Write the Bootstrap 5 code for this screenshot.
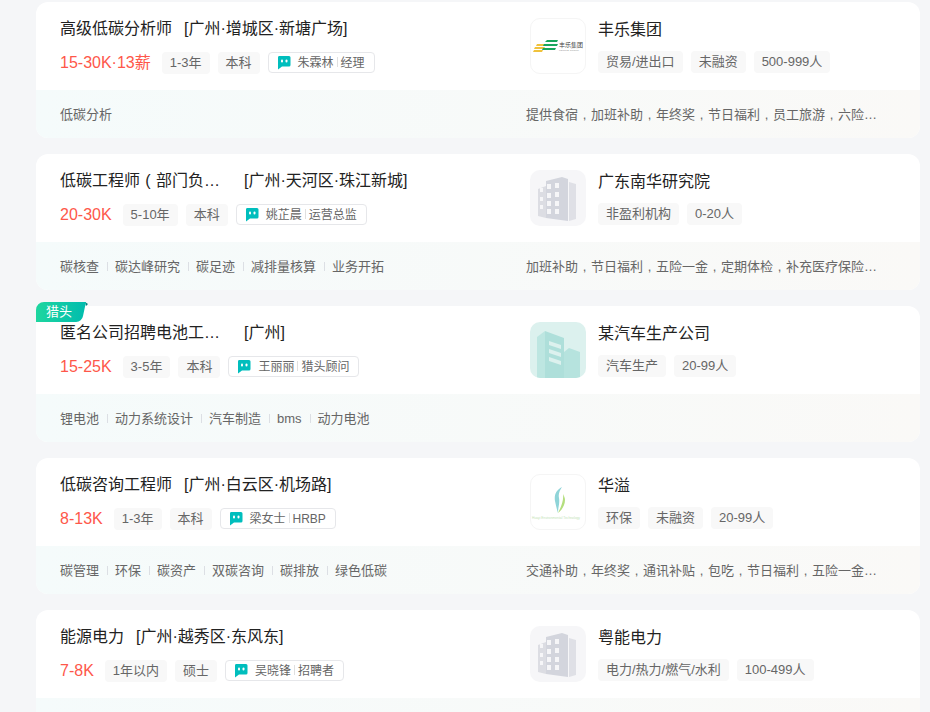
<!DOCTYPE html>
<html lang="zh-CN">
<head>
  <meta charset="UTF-8">
  <title>职位列表</title>
  <link href="https://cdn.jsdelivr.net/npm/bootstrap@5.3.0/dist/css/bootstrap.min.css" rel="stylesheet">
  <style>
    html, body { height: 712px; overflow: hidden; }
    body { background: #f5f6f8; font-family: "Liberation Sans", "Noto Sans CJK SC", sans-serif; color: #222; }
    svg { display: block; }
    .job-list { padding: 2px 10px 0 36px; }
    .job-item { background: #fff; border-radius: 12px; margin-bottom: 16px; position: relative; }
    .job-top { height: 88px; padding: 15px 0 16px; }
    .job-left { width: 494px; padding-left: 24px; flex: none; }
    .head-line { height: 24px; line-height: 24px; font-size: 16px; }
    .job-title { margin-right: 12px; white-space: nowrap; flex: none; }
    .title-cut { width: 172px; }
    .info-line { margin-top: 11px; height: 22px; gap: 8px; }
    .salary { font-size: 16px; line-height: 22px; color: #fe574a; margin-right: 3px; }
    .info-tag { height: 22px; line-height: 22px; padding: 0 8px; font-size: 13px; color: #666; background: #f8f8f8; border-radius: 4px; white-space: nowrap; }
    .boss-chip { height: 21px; padding: 0 9px 0 8px; border: 1px solid #e6e7ea; border-radius: 4px; font-size: 12px; color: #666; gap: 7px; white-space: nowrap; }
    .boss-sep { display: inline-block; width: 1px; height: 10px; background: #e0e0e0; margin: 0 3px; }
    .logo-box { width: 56px; height: 56px; border-radius: 10px; margin-top: 1px; margin-right: 12px; flex: none; overflow: hidden; }
    .logo-line { border: 1px solid #f5f5f5; background: #fff; }
    .logo-grey { background: #f6f6f8; }
    .logo-teal { background: #dcf1ee; }
    .company-name { padding-top: 1px; }
    .company-tags { margin-top: 10px; }
    .job-bottom { height: 48px; padding-top: 2px; border-radius: 0 0 12px 12px; background: linear-gradient(90deg, #f5fbfb, #faf9f7); font-size: 13px; color: #666; }
    .skill-list { width: 490px; padding-left: 24px; flex: none; white-space: nowrap; }
    .skill-sep { display: inline-block; width: 1px; height: 9px; background: #dcdfe4; margin: 0 7px 0 8px; }
    .welfare { white-space: nowrap; }
    .wide-mark { display: inline-block; width: 1em; text-align: center; }
    .hunter-mark { position: absolute; left: 0; top: -4px; width: 52px; height: 20px; }
    .hunter-text { position: absolute; left: 10px; top: 0; line-height: 20px; font-size: 13px; color: #fff; }
  </style>
</head>
<body>

<div class="job-list" id="jobList"></div>

<script src="https://cdn.jsdelivr.net/npm/bootstrap@5.3.0/dist/js/bootstrap.bundle.min.js"></script>
<script>
  const chatIcon = `<svg width="14" height="15" viewBox="0 0 14 15"><path d="M2 1h10a1.500 1.500 0 0 1 1.500 1.500v7.500a1.500 1.500 0 0 1-1.500 1.500H5l-4 3V2.500A1.500 1.500 0 0 1 2 1z" fill="#00bebd"/><rect x="4" y="4.500" width="2" height="3" rx="1" fill="#fff"/><rect x="8.500" y="4.500" width="2" height="3" rx="1" fill="#fff"/></svg>`;

  const greyBuilding = `<svg width="56" height="56" viewBox="0 0 56 56">
    <path d="M39 12l7 2v35l-7 2z" fill="#dfe0e6"/>
    <path d="M16 11l16-4 6 2v42l-22-3z" fill="#d3d5dd"/>
    <path d="M8 19l8-3v32l-8-2z" fill="#dcdde3"/>
    <g fill="#f6f6f8">
      <rect x="10" y="18" width="3" height="4"/><rect x="10" y="27" width="3" height="4"/><rect x="10" y="35" width="3" height="4"/>
      <rect x="17" y="14" width="4" height="5"/><rect x="25" y="13" width="4" height="5"/>
      <rect x="17" y="23" width="4" height="5"/><rect x="25" y="22" width="4" height="5"/>
      <rect x="17" y="31" width="4" height="5"/><rect x="25" y="31" width="4" height="5"/>
      <rect x="17" y="39" width="4" height="5"/><rect x="25" y="39" width="4" height="5"/>
    </g>
  </svg>`;

  const tealBuilding = `<svg width="56" height="56" viewBox="0 0 56 56">
    <path d="M15 9l19 7v40H15z" fill="#aedfda"/>
    <path d="M7 15l8-6v47H7z" fill="#bde6e1"/>
    <path d="M34 30l5-4 11 4v26H34z" fill="#b6e3de"/>
    <g fill="#dcf1ee">
      <path d="M19 19l12 4v4l-12-4z"/><path d="M19 27l12 4v4l-12-4z"/><path d="M19 35l12 4v4l-12-4z"/>
    </g>
  </svg>`;

  const fengleLogo = `<svg width="54" height="54" viewBox="0 0 54 54">
    <g fill="#f0c23c"><path d="M6 25h9l-1 2H5z"/><path d="M4 28h10l-1 2H3z"/><path d="M3 31h9l-1 2H2z"/></g>
    <g fill="#1aa65b"><path d="M16 21h11l-1 2H14z"/><path d="M13 25h14l-1 2H12z"/><path d="M12 29h13l-1 2H11z"/></g>
    <text x="28" y="28" font-size="6" fill="#444">丰乐集团</text>
    <text x="28" y="32" font-size="2.500" fill="#999">FENGLE GROUP</text>
  </svg>`;

  const huayiLogo = `<svg width="54" height="54" viewBox="0 0 54 54">
    <path d="M31 12c-6 3-8 8-7 14 1 5 2 9 3 12 0-6 2-10 1-15-1-4 1-8 3-11z" fill="#8fd4d8"/>
    <path d="M32 19c1 6-2 13-5 19 4-3 7-8 7-13 0-2-1-4-2-6z" fill="#b4de7e"/>
    <text x="1" y="44" font-size="3.300" fill="#c4e4b8">Huayi Environmental Technology</text>
  </svg>`;

  const jobs = [
    { title: "高级低碳分析师", place: "[广州·增城区·新塘广场]", salary: "15-30K·13薪", tags: ["1-3年", "本科"], boss: "朱霖林", bossTitle: "经理",
      company: "丰乐集团", logo: fengleLogo, logoClass: "logo-line", companyTags: ["贸易/进出口", "未融资", "500-999人"],
      skills: ["低碳分析"], welfare: "提供食宿，加班补助，年终奖，节日福利，员工旅游，六险…" },
    { title: "低碳工程师（部门负…", place: "[广州·天河区·珠江新城]", salary: "20-30K", tags: ["5-10年", "本科"], boss: "姚芷晨", bossTitle: "运营总监",
      company: "广东南华研究院", logo: greyBuilding, logoClass: "logo-grey", companyTags: ["非盈利机构", "0-20人"],
      skills: ["碳核查", "碳达峰研究", "碳足迹", "减排量核算", "业务开拓"], welfare: "加班补助，节日福利，五险一金，定期体检，补充医疗保险…" },
    { title: "匿名公司招聘电池工…", place: "[广州]", salary: "15-25K", tags: ["3-5年", "本科"], boss: "王丽丽", bossTitle: "猎头顾问", hunter: true,
      company: "某汽车生产公司", logo: tealBuilding, logoClass: "logo-teal", companyTags: ["汽车生产", "20-99人"],
      skills: ["锂电池", "动力系统设计", "汽车制造", "bms", "动力电池"], welfare: "" },
    { title: "低碳咨询工程师", place: "[广州·白云区·机场路]", salary: "8-13K", tags: ["1-3年", "本科"], boss: "梁女士", bossTitle: "HRBP",
      company: "华溢", logo: huayiLogo, logoClass: "logo-line", companyTags: ["环保", "未融资", "20-99人"],
      skills: ["碳管理", "环保", "碳资产", "双碳咨询", "碳排放", "绿色低碳"], welfare: "交通补助，年终奖，通讯补贴，包吃，节日福利，五险一金…" },
    { title: "能源电力", place: "[广州·越秀区·东风东]", salary: "7-8K", tags: ["1年以内", "硕士"], boss: "吴晓锋", bossTitle: "招聘者",
      company: "粤能电力", logo: greyBuilding, logoClass: "logo-grey", companyTags: ["电力/热力/燃气/水利", "100-499人"],
      skills: [], welfare: "" }
  ];

  // the screenshot centres full-width punctuation inside its em box
  const centreMarks = text => text
    .replace(/，/g, '<span class="wide-mark">,</span>')
    .replace(/（/g, '<span class="wide-mark">(</span>');

  const jobList = document.getElementById("jobList");

  jobs.forEach(job => {
    const item = document.createElement("div");
    item.className = "job-item";
    const hunter = job.hunter ? `
      <div class="hunter-mark">
        <svg width="52" height="20" viewBox="0 0 52 20">
          <defs><linearGradient id="hunterFill" x1="0" x2="1"><stop offset="0" stop-color="#1ed69f"/><stop offset="1" stop-color="#00bcae"/></linearGradient></defs>
          <path d="M49 0l3 2-2 2z" fill="#00807a"/>
          <path d="M8 0H50L47 14a7 7 0 0 1-7 6H0V8a8 8 0 0 1 8-8z" fill="url(#hunterFill)"/>
        </svg>
        <span class="hunter-text">猎头</span>
      </div>` : "";
    const skills = job.skills.map(s => `<span>${s}</span>`).join('<span class="skill-sep"></span>');
    const titleClass = job.title.endsWith("…") ? "job-title title-cut" : "job-title";
    item.innerHTML = `${hunter}
      <div class="job-top d-flex">
        <div class="job-left">
          <div class="head-line d-flex">
            <div class="${titleClass}">${centreMarks(job.title)}</div>
            <div>${job.place}</div>
          </div>
          <div class="info-line d-flex align-items-start">
            <span class="salary">${job.salary}</span>
            ${job.tags.map(t => `<span class="info-tag">${t}</span>`).join("")}
            <span class="boss-chip d-flex align-items-center">${chatIcon}<span>${job.boss}<span class="boss-sep"></span>${job.bossTitle}</span></span>
          </div>
        </div>
        <div class="d-flex">
          <div class="logo-box ${job.logoClass}">${job.logo}</div>
          <div>
            <div class="head-line company-name">${job.company}</div>
            <div class="info-line company-tags d-flex">${job.companyTags.map(t => `<span class="info-tag">${t}</span>`).join("")}</div>
          </div>
        </div>
      </div>
      <div class="job-bottom d-flex align-items-center">
        <div class="skill-list">${skills}</div>
        <div class="welfare">${centreMarks(job.welfare)}</div>
      </div>`;
    jobList.appendChild(item);
  });
</script>

</body>
</html>
